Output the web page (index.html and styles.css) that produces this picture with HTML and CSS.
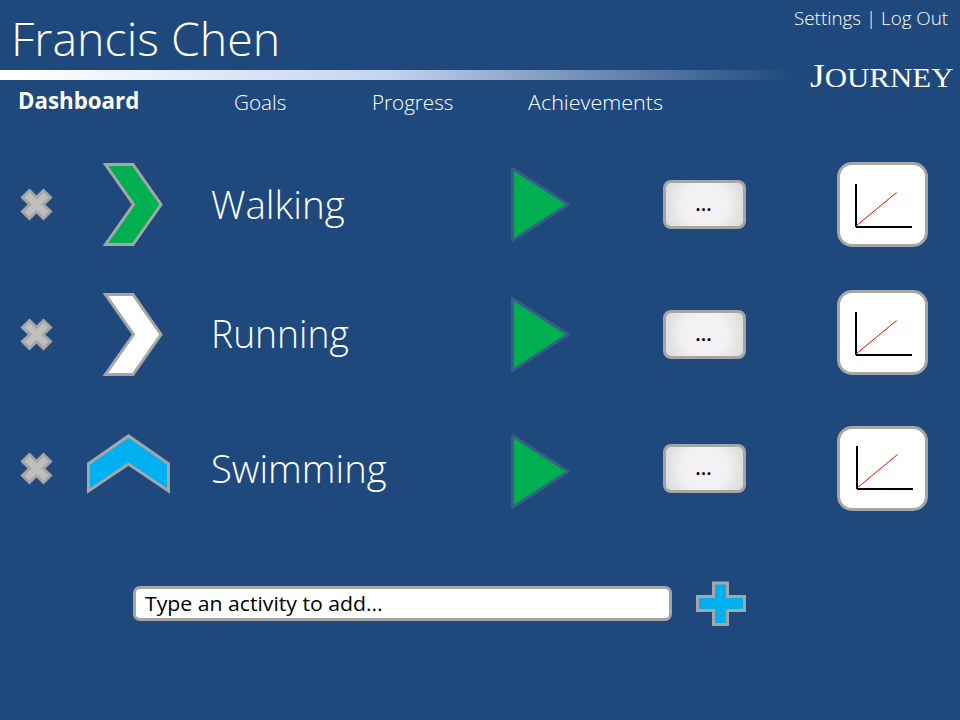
FILE: index.html
```html
<!DOCTYPE html>
<html lang="en">
<head>
<meta charset="utf-8">
<title>Journey</title>
<link rel="stylesheet" href="styles.css">
</head>
<body>
<svg class="defs" width="0" height="0" aria-hidden="true">
  <symbol id="remove" viewBox="0 0 34 34"><path d="M9.500 2.500 16.500 9.500 23.500 2.500 30.500 9.500 23.300 16.500 30.500 23.500 23.500 30.500 16.500 23.500 9.500 30.500 2.500 23.500 9.700 16.500 2.500 9.500Z" fill="#bfbfbf" stroke="#a6a6a6" stroke-width="3"/></symbol>
  <symbol id="chevron" viewBox="0 0 62 84"><path d="M4.500 1.500H32L60 41.500 32 81.500H4.500L32.500 41.500Z" stroke="#a6a6a6" stroke-width="3"/></symbol>
  <symbol id="play" viewBox="0 0 60 76"><path d="M2.500 1.500 58.300 37.500 2.500 73.500Z" fill="#00b050" stroke="#385d8a" stroke-width="3" stroke-linejoin="round"/></symbol>
  <symbol id="graph" viewBox="0 0 58 46"><path d="M1.500 43.500 42.500 9.500" stroke="red" stroke-width="1"/><path d="M2 1V44M2 44H58" stroke="#000" stroke-width="2"/></symbol>
</svg>
<header class="header">
  <h1 class="user"><span class="fit">Francis Chen</span></h1>
  <div class="account"><span class="fit fit-account"><a>Settings</a> | <a>Log Out</a></span></div>
</header>
<div class="brandbar">
  <div class="rule"></div>
  <div class="brand"><span class="fit fit-brand"><span class="initial">J</span>OURNEY</span></div>
</div>
<nav class="nav">
  <a class="current"><span class="fit">Dashboard</span></a>
  <a><span class="fit fit-goals">Goals</span></a>
  <a><span class="fit fit-progress">Progress</span></a>
  <a><span class="fit fit-achievements">Achievements</span></a>
</nav>
<main>
  <section class="activity walking">
    <svg class="remove"><use href="#remove"/></svg>
    <svg class="trend green"><use href="#chevron"/></svg>
    <h2><span class="fit">Walking</span></h2>
    <svg class="play"><use href="#play"/></svg>
    <button class="more">...</button>
    <div class="chart"><svg><use href="#graph"/></svg></div>
  </section>
  <section class="activity running">
    <svg class="remove"><use href="#remove"/></svg>
    <svg class="trend white"><use href="#chevron"/></svg>
    <h2><span class="fit">Running</span></h2>
    <svg class="play"><use href="#play"/></svg>
    <button class="more">...</button>
    <div class="chart"><svg><use href="#graph"/></svg></div>
  </section>
  <section class="activity swimming">
    <svg class="remove"><use href="#remove"/></svg>
    <svg class="trend up" viewBox="0 0 84 62"><path d="M2.500 29.700 42.500 1.900 82.500 29.700V57L42.500 30 2.500 57Z" fill="#00b0f0" stroke="#a6a6a6" stroke-width="3"/></svg>
    <h2><span class="fit">Swimming</span></h2>
    <svg class="play"><use href="#play"/></svg>
    <button class="more">...</button>
    <div class="chart"><svg><use href="#graph"/></svg></div>
  </section>
  <form class="add">
    <div class="field"><span class="fit">Type an activity to add...</span></div>
    <svg class="plus" viewBox="0 0 52 46"><path d="M17.500 2H31.500V15.500H48.500V29.500H31.500V43.500H17.500V29.500H1.500V15.500H17.500Z" fill="#00b0f0" stroke="#a6a6a6" stroke-width="3"/></svg>
  </form>
</main>
</body>
</html>
```
FILE: styles.css
```css
* { box-sizing: border-box; }
body { margin: 0; width: 960px; height: 720px; overflow: hidden; background: #1f497d; color: #fff; font-family: "Open Sans", "Noto Sans", sans-serif; font-weight: 320; }
svg { display: block; }
.defs { position: absolute; }
.fit { display: inline-block; white-space: pre; transform-origin: left center; }
.fit-account { transform: scaleX(1.045); }
.fit-brand { transform: scaleX(1.145); }
.fit-goals { transform: scaleX(1.01); }
.fit-progress { transform: scaleX(1.005); }
.fit-achievements { transform: scaleX(1.05); }
.walking .fit { transform: scaleX(1.015); }
.running .fit { transform: scaleX(.98); }
.swimming .fit { transform: scaleX(1.005); }
.field .fit { transform: scaleX(1.06); }
h1, h2 { margin: 0; font-weight: 320; white-space: nowrap; }
.header { display: flex; justify-content: space-between; height: 70px; }
.user { padding: 6px 0 0 11px; font-size: 46.500px; line-height: 64px; }
.account { width: 166.500px; padding-top: 5px; font-size: 18px; line-height: 26px; white-space: nowrap; }
.brandbar { display: flex; height: 10px; }
.rule { width: 800px; background: linear-gradient(90deg, #fff 0, #fff 2%, #c6d4ef 48%, #1f497d 99%); }
.brand { margin: -13px 0 0 10px; font: 27px/38px "Liberation Serif", serif; white-space: nowrap; }
.initial { font-size: 33px; }
.nav { display: grid; grid-template-columns: 216px 138px 156px auto; padding: 7px 0 0 18px; height: 82px; font-size: 20.500px; line-height: 31px; white-space: nowrap; }
.current { font-size: 22.300px; font-weight: 700; line-height: 28px; }
.activity { display: grid; grid-template-columns: 66px 125px 299px 153px 174px 91px; align-items: center; height: 85px; padding-left: 20px; }
.running { margin-top: 45px; }
.swimming { margin-top: 49px; }
.remove { width: 34px; height: 34px; }
.trend { width: 62px; height: 84px; margin-left: 15px; }
.trend.up { width: 84px; height: 62px; margin: -8px 0 0; }
.green { fill: #00b050; }
.white { fill: #fff; }
h2 { margin: -2px 0 0; font-size: 38px; line-height: 60px; }
.running h2 { margin-top: -4px; }
.play { width: 60px; height: 76px; }
.swimming .play { margin-top: 6px; }
.more { width: 83px; height: 49px; padding: 0 2px 1px 0; border: 3px solid #a6a6a6; border-radius: 8px; background: radial-gradient(circle, #f2f2f2 50%, #d9d9d9 100%); color: #000; font: 600 20px/28px "Open Sans", sans-serif; }
.chart { width: 91px; height: 85px; padding: 18px 0 0 14px; border: 3px solid #a6a6a6; border-radius: 15px; background: #fff; }
.chart svg { width: 58px; height: 46px; }
.running .chart { margin-top: -4px; }
.swimming .chart { padding-top: 16px; }
.swimming .chart svg { margin-left: 1px; }
.add { display: flex; margin: 70px 0 0 133px; }
.field { width: 539px; height: 35px; margin-top: 5px; padding-left: 9px; border: 3px solid #a6a6a6; border-radius: 7px; background: #fff; color: #000; font-size: 20px; font-weight: 400; line-height: 29px; white-space: nowrap; }
.plus { width: 52px; height: 46px; margin-left: 24px; }
```
